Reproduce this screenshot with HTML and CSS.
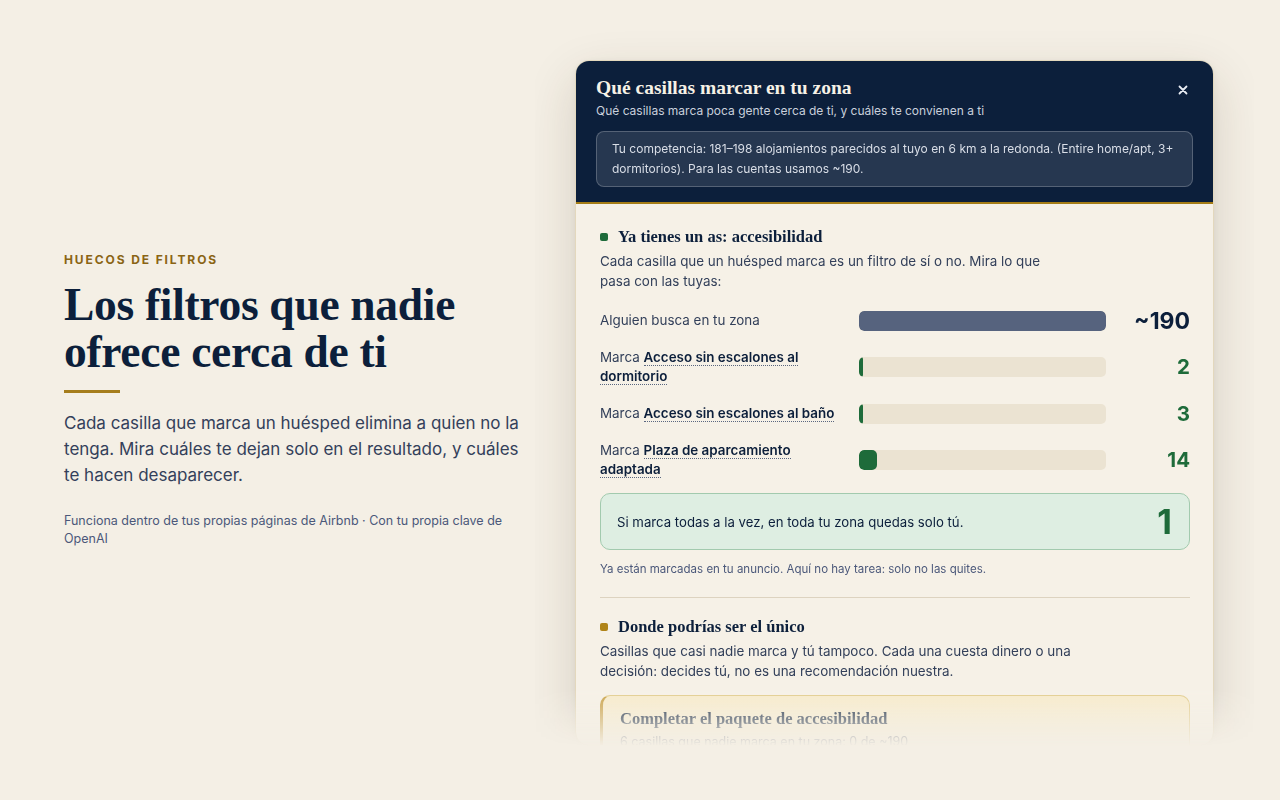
FILE: index.html
```html
<!DOCTYPE html>
<html lang="es">
<head>
<meta charset="utf-8">
<title>Huecos de filtros</title>
<link rel="stylesheet" href="styles.css">
</head>
<body>
<main class="page">
  <section class="intro">
    <div class="eyebrow">HUECOS DE FILTROS</div>
    <h1 class="headline">Los filtros que nadie ofrece cerca de ti</h1>
    <div class="rule"></div>
    <p class="lead">Cada casilla que marca un huésped elimina a quien no la tenga. Mira cuáles te dejan solo en el resultado, y cuáles te hacen desaparecer.</p>
    <p class="fine">Funciona dentro de tus propias páginas de Airbnb · Con tu propia clave de OpenAI</p>
  </section>

  <div class="panel-wrap">
    <div class="panel">
      <header class="panel-head">
        <div class="head-top">
          <div>
            <h2 class="panel-title">Qué casillas marcar en tu zona</h2>
            <p class="panel-sub">Qué casillas marca poca gente cerca de ti, y cuáles te convienen a ti</p>
          </div>
          <button class="close" aria-label="Cerrar">
            <svg width="10" height="10" viewBox="0 0 10 10"><path d="M1.5 1.5 L8.5 8.5 M8.5 1.5 L1.5 8.5" stroke="currentColor" stroke-width="1.8" stroke-linecap="round"/></svg>
          </button>
        </div>
        <div class="comp">Tu competencia: 181–198 alojamientos parecidos al tuyo en 6 km a la redonda. (Entire home/apt, 3+ dormitorios). Para las cuentas usamos ~190.</div>
      </header>

      <div class="panel-body">
        <section class="block">
          <h3 class="block-title"><span class="dot dot-green"></span>Ya tienes un as: accesibilidad</h3>
          <p class="block-desc">Cada casilla que un huésped marca es un filtro de sí o no. Mira lo que pasa con las tuyas:</p>

          <div class="rows">
            <div class="row">
              <div class="label">Alguien busca en tu zona</div>
              <div class="track"><div class="fill fill-total" style="width:100%"></div></div>
              <div class="num num-total">~190</div>
            </div>
            <div class="row">
              <div class="label">Marca <b class="term">Acceso sin escalones al dormitorio</b></div>
              <div class="track"><div class="fill" style="width:1.6%"></div></div>
              <div class="num">2</div>
            </div>
            <div class="row">
              <div class="label">Marca <b class="term">Acceso sin escalones al baño</b></div>
              <div class="track"><div class="fill" style="width:1.6%"></div></div>
              <div class="num">3</div>
            </div>
            <div class="row">
              <div class="label">Marca <b class="term">Plaza de aparcamiento adaptada</b></div>
              <div class="track"><div class="fill" style="width:7.4%"></div></div>
              <div class="num">14</div>
            </div>
          </div>

          <div class="result">
            <span>Si marca todas a la vez, en toda tu zona quedas solo tú.</span>
            <span class="result-num">1</span>
          </div>
          <p class="note">Ya están marcadas en tu anuncio. Aquí no hay tarea: solo no las quites.</p>
        </section>

        <hr class="divider">

        <section class="block">
          <h3 class="block-title"><span class="dot dot-gold"></span>Donde podrías ser el único</h3>
          <p class="block-desc">Casillas que casi nadie marca y tú tampoco. Cada una cuesta dinero o una decisión: decides tú, no es una recomendación nuestra.</p>
          <div class="idea">
            <h4 class="idea-title">Completar el paquete de accesibilidad</h4>
            <p class="idea-sub">6 casillas que nadie marca en tu zona: 0 de ~190</p>
          </div>
        </section>
      </div>
    </div>
  </div>
</main>
</body>
</html>
```

FILE: styles.css
```css
* { box-sizing: border-box; }

html, body {
  margin: 0;
  padding: 0;
  background: #f4efe5;
}

body {
  font-family: Inter, "Noto Sans", "Liberation Sans", sans-serif;
  color: #0c1f3b;
  height: 800px;
  overflow: hidden;
}

.page {
  height: 800px;
  display: grid;
  grid-template-columns: 456px 639px;
  column-gap: 55px;
  padding-left: 64px;
  align-items: center;
}

/* Left column */
.eyebrow {
  font-size: 12px;
  font-weight: 700;
  letter-spacing: 1.9px;
  color: #8a6414;
  line-height: 16px;
}

.headline {
  margin: 13px 0 0;
  font-family: "Liberation Serif", "DejaVu Serif", serif;
  font-weight: 700;
  font-size: 45.5px;
  line-height: 47px;
  letter-spacing: -0.3px;
  color: #0c1f3b;
}

.rule {
  width: 56px;
  height: 3px;
  background: #a57d1c;
  margin-top: 15px;
}

.lead {
  margin: 17px 0 0;
  font-size: 17px;
  line-height: 26px;
  color: #33405a;
}

.fine {
  margin: 24px 0 0;
  font-size: 12.5px;
  line-height: 18px;
  color: #4b587a;
}

/* Panel */
.panel-wrap {
  align-self: start;
  margin: 20px -40px 0;
  padding: 40px 40px 0;
  -webkit-mask-image: linear-gradient(to bottom, #000 0, #000 calc(100% - 56px), transparent 100%);
  mask-image: linear-gradient(to bottom, #000 0, #000 calc(100% - 56px), transparent 100%);
}

.panel {
  height: 686px;
  overflow: hidden;
  border-radius: 14px;
  border: 1px solid #e3d8bd;
  background: #f6f1e7;
  box-shadow: 0 18px 50px rgba(60, 45, 20, 0.16), 0 2px 8px rgba(60, 45, 20, 0.06);
}

.panel-head {
  background: #0c1f3b;
  padding: 15px 20px 15px;
  border-bottom: 2px solid #a57d16;
}

.head-top {
  display: flex;
  justify-content: space-between;
  align-items: flex-start;
}

.panel-title {
  margin: 0;
  font-family: "Liberation Serif", "DejaVu Serif", serif;
  font-weight: 700;
  font-size: 19.5px;
  line-height: 24px;
  color: #f6f1e6;
}

.panel-sub {
  margin: 2px 0 0;
  font-size: 12px;
  line-height: 17px;
  color: #c9d0dc;
}

.close {
  border: 0;
  background: transparent;
  color: #e8ecf2;
  padding: 0;
  margin: 8px 4px 0 0;
  width: 12px;
  height: 12px;
  display: flex;
  align-items: center;
  justify-content: center;
}

.comp {
  margin-top: 12px;
  padding: 7px 15px;
  border: 1px solid rgba(255, 255, 255, 0.22);
  background: rgba(255, 255, 255, 0.11);
  border-radius: 8px;
  font-size: 12px;
  line-height: 20px;
  color: #d9dee7;
}

.panel-body {
  padding: 23px 23px 0 24px;
}

.block-title {
  margin: 0;
  display: flex;
  align-items: center;
  gap: 10px;
  font-family: "Liberation Serif", "DejaVu Serif", serif;
  font-weight: 700;
  font-size: 16.5px;
  line-height: 20px;
  color: #0c1f3b;
}

.dot {
  width: 8px;
  height: 8px;
  border-radius: 2px;
  flex: none;
}
.dot-green { background: #1e6b3a; }
.dot-gold { background: #b08418; }

.block-desc {
  margin: 4px 0 0;
  max-width: 472px;
  font-size: 13.4px;
  line-height: 20px;
  color: #33405a;
}

.rows {
  margin-top: 15px;
  display: flex;
  flex-direction: column;
  gap: 13px;
}

.row {
  display: grid;
  grid-template-columns: 245px 1fr 70px;
  column-gap: 14px;
  align-items: center;
  min-height: 29px;
}

.label {
  font-size: 13.4px;
  line-height: 19px;
  color: #33405a;
}

.term {
  font-weight: 600;
  color: #0c1f3b;
  border-bottom: 1px dotted #5a6780;
}

.track {
  height: 20px;
  border-radius: 5px;
  background: #ebe3d2;
  overflow: hidden;
}

.fill {
  height: 100%;
  min-width: 4px;
  border-radius: 5px;
  background: #1e6b3a;
}
.fill-total { background: #56637e; }

.num {
  text-align: right;
  font-size: 20.5px;
  font-weight: 700;
  line-height: 28px;
  color: #1e6b3a;
}
.num-total {
  font-size: 23px;
  color: #0c1f3b;
}

.result {
  margin-top: 14px;
  display: flex;
  justify-content: space-between;
  align-items: center;
  padding: 10px 17px 10px 16px;
  border: 1px solid #a2caae;
  background: #deeee2;
  border-radius: 10px;
  font-size: 13.2px;
  line-height: 20px;
  color: #0c1f3b;
}

.result-num {
  font-size: 34px;
  font-weight: 700;
  line-height: 35px;
  color: #1e6b3a;
}

.note {
  margin: 11px 0 0;
  font-size: 11.5px;
  line-height: 16px;
  color: #4b587a;
}

.divider {
  border: 0;
  height: 1px;
  background: #ddd3c0;
  margin: 20px 0 19px;
}

.idea {
  margin-top: 14px;
  padding: 13px 20px 14px 17px;
  border: 1px solid #e2cd8e;
  border-left: 3px solid #c9a24a;
  border-radius: 10px;
  background: linear-gradient(to bottom, #f7ebcb, #f6efdc);
}

.idea-title {
  margin: 0;
  font-family: "Liberation Serif", "DejaVu Serif", serif;
  font-weight: 700;
  font-size: 16.5px;
  line-height: 20px;
  color: #0c1f3b;
}

.idea-sub {
  margin: 4px 0 0;
  font-size: 12.5px;
  line-height: 18px;
  color: #33405a;
}
```
